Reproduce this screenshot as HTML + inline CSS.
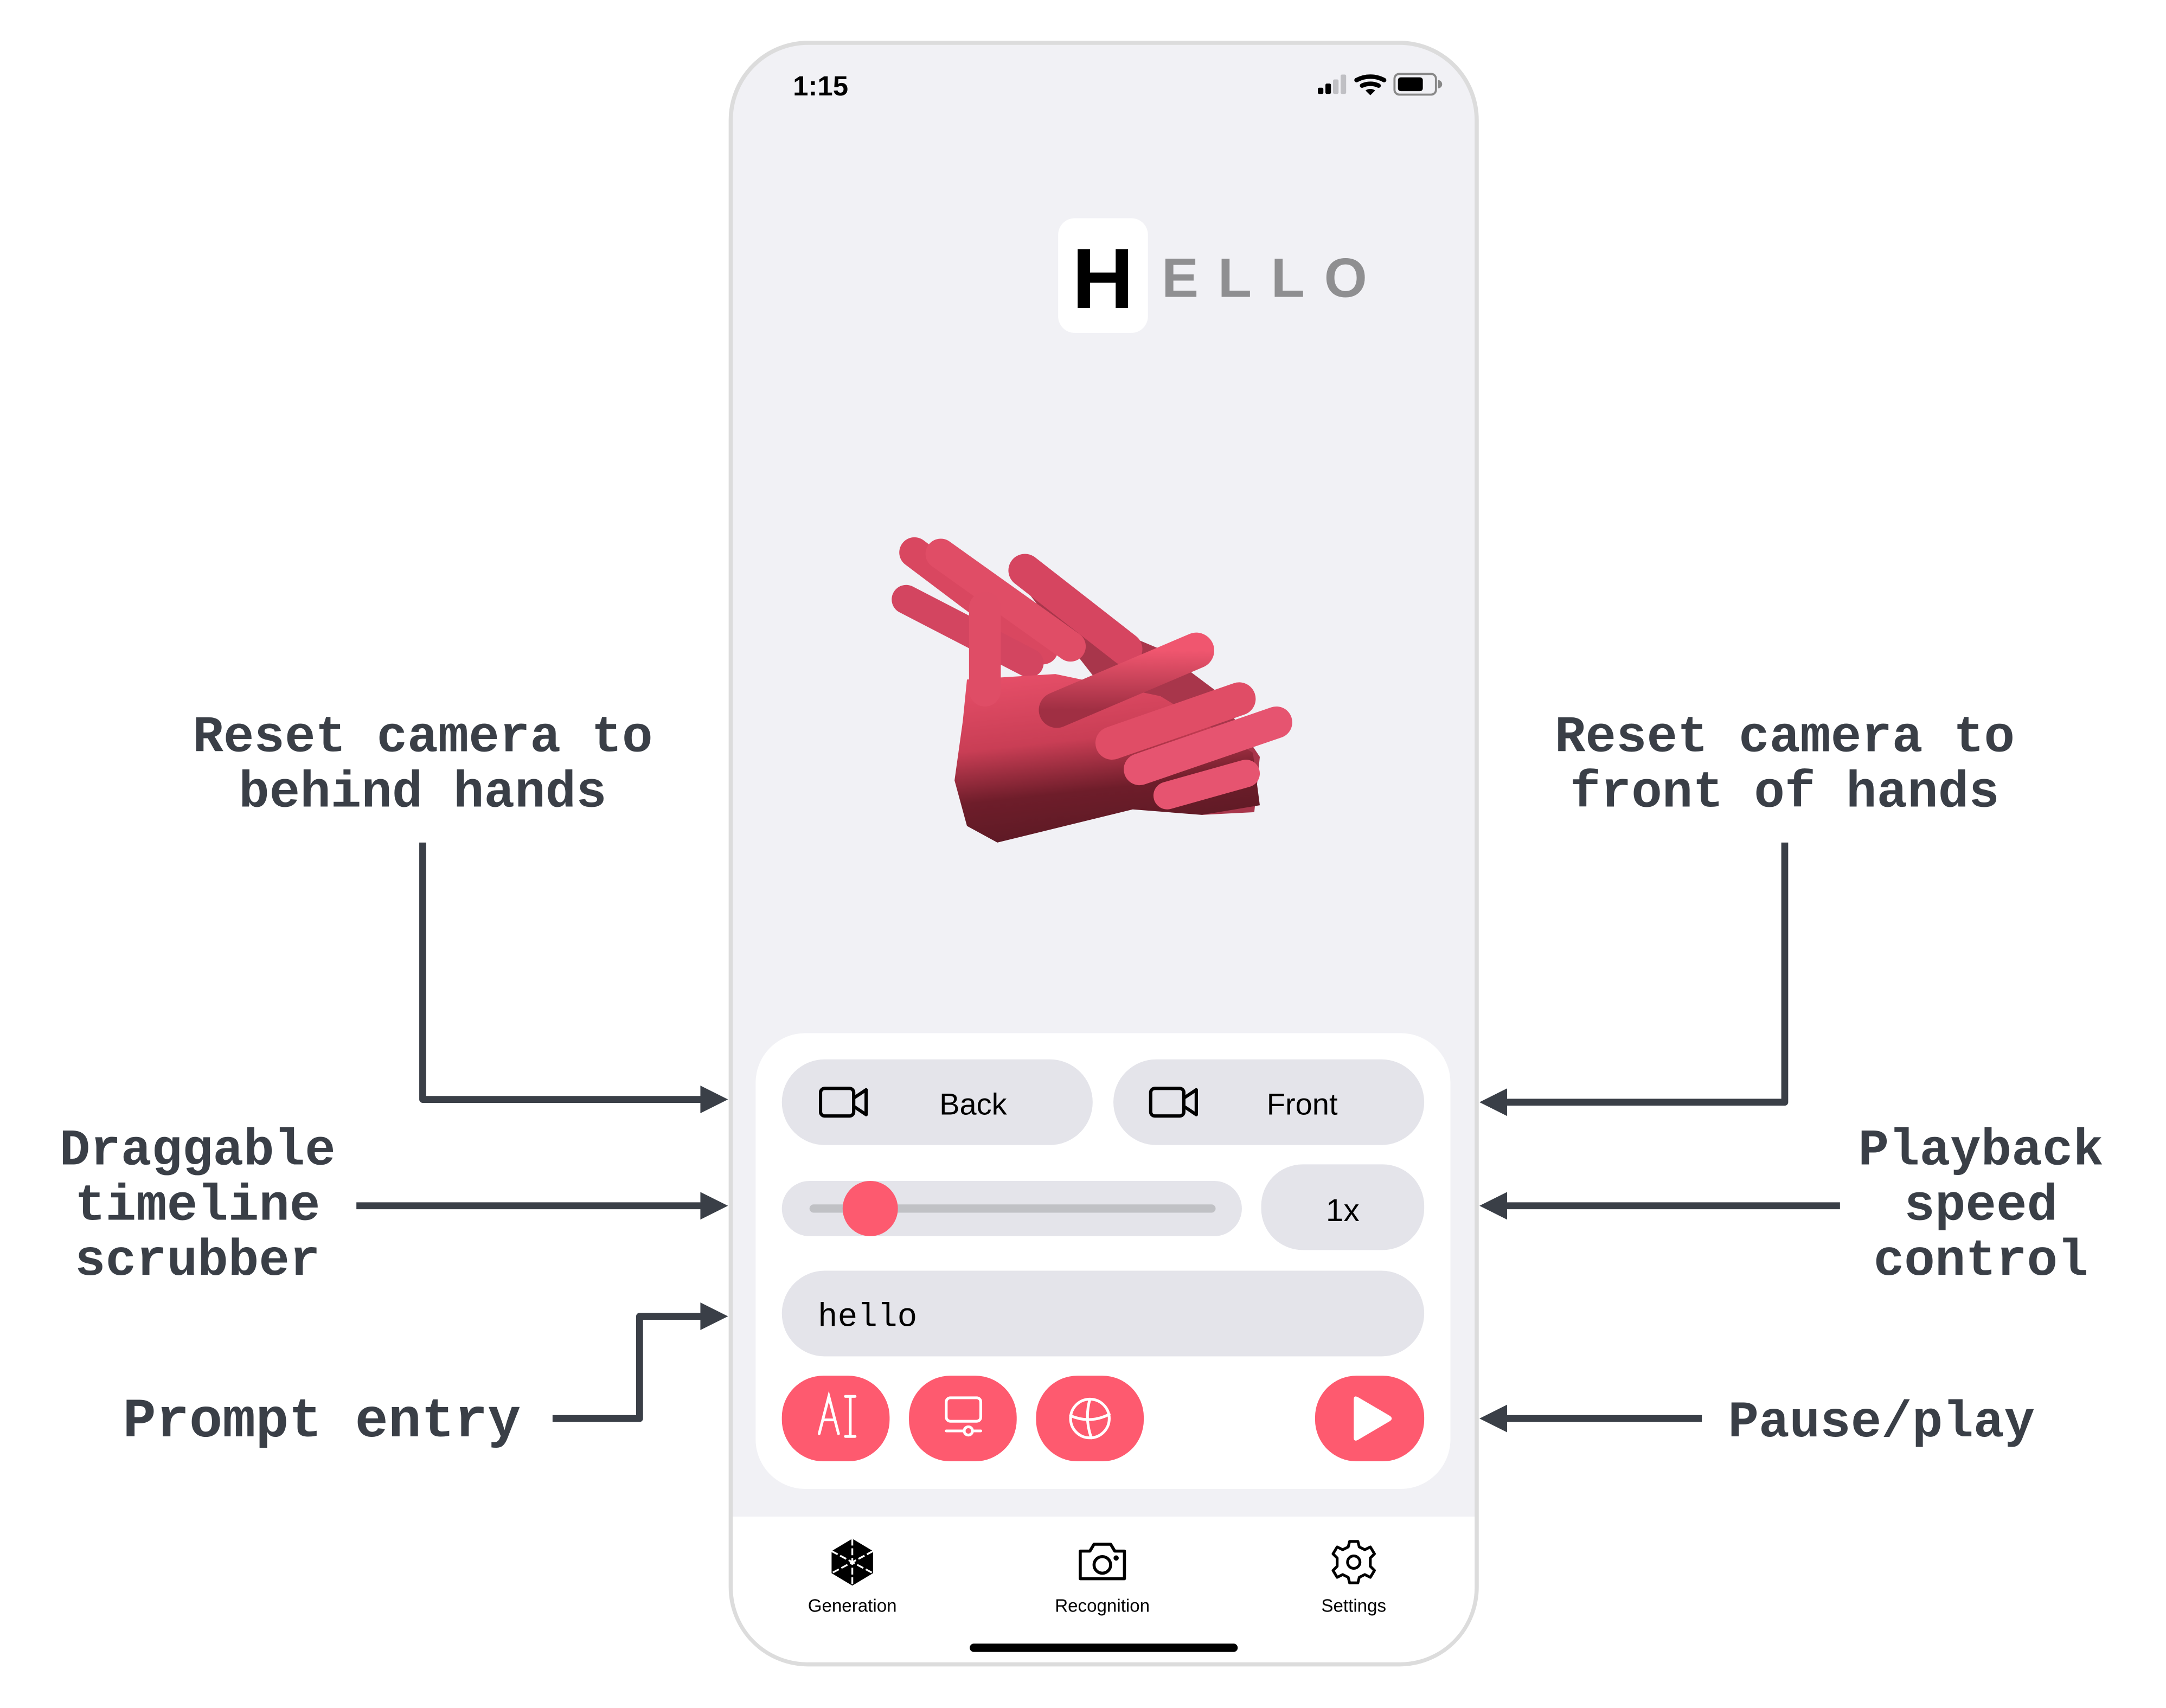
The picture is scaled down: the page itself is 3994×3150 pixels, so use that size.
<!DOCTYPE html>
<html><head><meta charset="utf-8"><style>html,body{margin:0;padding:0;background:#fff;}svg{display:block}</style></head>
<body>
<svg width="3994" height="3150" viewBox="0 0 1568 1236.6" preserveAspectRatio="none" xmlns="http://www.w3.org/2000/svg">
<defs>
<linearGradient id="pg" x1="0" y1="0" x2="0.2" y2="1"><stop offset="0" stop-color="#e9506a"/><stop offset="0.45" stop-color="#c93e55"/><stop offset="0.75" stop-color="#6e1d2a"/><stop offset="1" stop-color="#5e1a25"/></linearGradient>
<linearGradient id="fg" x1="0" y1="0" x2="0" y2="1"><stop offset="0" stop-color="#f0566f"/><stop offset="1" stop-color="#a02f43"/></linearGradient>
</defs>
<rect width="1568" height="1237" fill="#fff"/>
<rect x="529" y="31" width="540" height="1174" rx="56" fill="#f1f1f5" stroke="#dcdcdc" stroke-width="3"/>
<path d="M530.5 1098 H1067.5 V1150 A54 54 0 0 1 1013 1203.5 H585 A54 54 0 0 1 530.5 1150 Z" fill="#fff"/>
<text x="574" y="69" font-family="Liberation Sans, sans-serif" font-size="20" font-weight="bold" fill="#000">1:15</text>
<rect x="954" y="63.5" width="4" height="4.5" rx="1" fill="#000"/>
<rect x="959.5" y="60.5" width="4" height="7.5" rx="1" fill="#000"/>
<rect x="965" y="57.5" width="4" height="10.5" rx="1" fill="#c0c0c4"/>
<rect x="970.5" y="54" width="4" height="14" rx="1" fill="#c0c0c4"/>
<path d="M982 58 A21 21 0 0 1 1002 58" stroke="#000" stroke-width="3.2" fill="none" stroke-linecap="round"/>
<path d="M986 62 A14 14 0 0 1 998 62" stroke="#000" stroke-width="3.2" fill="none" stroke-linecap="round"/>
<path d="M988.5 65.5 L992 69 L995.5 65.5 A6 6 0 0 0 988.5 65.5Z" fill="#000"/>
<rect x="1009.5" y="53.5" width="30" height="15" rx="3.5" fill="none" stroke="#888" stroke-width="1.5"/>
<rect x="1012" y="56" width="18" height="10" rx="2" fill="#000"/>
<path d="M1041 58 A3 3 0 0 1 1041 64Z" fill="#888"/>
<rect x="766" y="158" width="65" height="83" rx="12" fill="#fff"/>
<text x="776" y="223" font-family="Liberation Sans, sans-serif" font-size="62" font-weight="bold" fill="#000">H</text>
<text x="841" y="215" font-family="Liberation Sans, sans-serif" font-size="40" font-weight="bold" fill="#8f8f91" letter-spacing="14">ELLO</text>
<!-- hands -->
<path d="M745 430 L840 470 L880 500 L912 548 L908 588 L870 590 Z" fill="#a8364b"/>
<g stroke-linecap="round" fill="none">
<line x1="662" y1="400" x2="755" y2="470" stroke="#d94760" stroke-width="22"/>
<line x1="681" y1="401" x2="775" y2="468" stroke="#e04d66" stroke-width="22"/>
<line x1="742" y1="413" x2="815" y2="470" stroke="#d64560" stroke-width="24"/>
<line x1="656" y1="434" x2="745" y2="480" stroke="#d34560" stroke-width="21"/>
</g>
<path d="M700 492 L764 488 L840 504 L907 545 L912 583 L870 590 L820 586 L722 610 L700 598 L691 565 L697 522 Z" fill="url(#pg)"/>
<line x1="713" y1="440" x2="713" y2="500" stroke="#df4d66" stroke-width="23" stroke-linecap="round"/>
<g stroke-linecap="round" fill="none">
<line x1="866" y1="471" x2="765" y2="514" stroke="url(#fg)" stroke-width="26"/>
<line x1="897" y1="506" x2="805" y2="538" stroke="#e04d66" stroke-width="24"/>
<line x1="924" y1="523" x2="825" y2="557" stroke="#e65470" stroke-width="23"/>
<line x1="902" y1="560" x2="845" y2="576" stroke="#e65470" stroke-width="20"/>
</g>
<rect x="547" y="748" width="503" height="330" rx="36" fill="#fff"/>
<rect x="566" y="767" width="225" height="62" rx="31" fill="#e4e4ea"/>
<rect x="806" y="767" width="225" height="62" rx="31" fill="#e4e4ea"/>
<g stroke="#000" stroke-width="2.4" fill="none" stroke-linejoin="round">
<rect x="594" y="788" width="24" height="20" rx="3"/><path d="M618 795 L627 789 V807 L618 801"/>
<rect x="833" y="788" width="24" height="20" rx="3"/><path d="M857 795 L866 789 V807 L857 801"/>
</g>
<text x="680" y="807" font-family="Liberation Sans, sans-serif" font-size="22" fill="#000">Back</text>
<text x="917" y="807" font-family="Liberation Sans, sans-serif" font-size="22" fill="#000">Front</text>
<rect x="566" y="855" width="333" height="40" rx="20" fill="#e4e4ea"/>
<rect x="586" y="872" width="294" height="6" rx="3" fill="#c0c1c5"/>
<circle cx="630" cy="875" r="20" fill="#fd5a6f"/>
<rect x="913" y="843" width="118" height="62" rx="30" fill="#e4e4ea"/>
<text x="972" y="884" text-anchor="middle" font-family="Liberation Sans, sans-serif" font-size="23" fill="#000">1x</text>
<rect x="566" y="920" width="465" height="62" rx="31" fill="#e4e4ea"/>
<text x="592" y="960" font-family="Liberation Mono, monospace" font-size="24" fill="#000">hello</text>
<g fill="#fe5a6f">
<rect x="566" y="996" width="78" height="62" rx="30"/>
<rect x="658" y="996" width="78" height="62" rx="30"/>
<rect x="750" y="996" width="78" height="62" rx="30"/>
<rect x="952" y="996" width="79" height="62" rx="30"/>
</g>
<g stroke="#fff" stroke-width="2" fill="none" stroke-linecap="round">
<path d="M593 1038 L600 1011 L607 1038 M596 1028 H604"/>
<path d="M612 1011 H619 M615.5 1011 V1040 M612 1040 H619"/>
<rect x="685" y="1012" width="25" height="17" rx="3"/>
<path d="M685 1036 H698 M704 1036 H710"/><circle cx="701" cy="1036" r="3"/>
<ellipse cx="789" cy="1027" rx="14" ry="14"/>
<path d="M789 1013 Q785 1027 790 1041 M775 1025 Q789 1031 803 1024"/>
</g>
<path d="M980 1013 Q980 1010 983 1011.5 L1006 1025 Q1009 1027 1006 1029 L983 1042.5 Q980 1044 980 1041 Z" fill="#fff"/>
<g transform="translate(617,1131)">
<path d="M0 -17 L15 -8 V8 L0 17 L-15 8 V-8 Z" fill="#000"/>
<path d="M0 -17 V17 M-15 -8 L15 8 M15 -8 L-15 8" stroke="#fff" stroke-width="1.3" stroke-dasharray="5 2"/>
</g>
<g transform="translate(798,1131)" fill="none" stroke="#000" stroke-width="2.2" stroke-linejoin="round">
<path d="M-16 -8 H-9 L-6 -13 H6 L9 -8 H16 V12 H-16 Z"/><circle cx="0" cy="2" r="6"/><circle cx="10" cy="-3" r="0.8" fill="#000"/>
</g>
<g transform="translate(980,1131)" fill="none" stroke="#000" stroke-width="2">
<path d="M-3 -15 H3 L4 -11 L8 -9 L12 -11 L15 -6 L12 -3 V3 L15 6 L12 11 L8 9 L4 11 L3 15 H-3 L-4 11 L-8 9 L-12 11 L-15 6 L-12 3 V-3 L-15 -6 L-12 -11 L-8 -9 L-4 -11 Z" stroke-linejoin="round"/>
<circle r="4.5"/>
</g>
<g font-family="Liberation Sans, sans-serif" font-size="13" fill="#000" text-anchor="middle">
<text x="617" y="1167">Generation</text><text x="798" y="1167">Recognition</text><text x="980" y="1167">Settings</text>
</g>
<rect x="702" y="1190" width="194" height="6" rx="3" fill="#000"/>
<g font-family="Liberation Mono, monospace" font-weight="bold" font-size="37" fill="#3a3f47" text-anchor="middle">
<text x="306" y="544">Reset camera to</text><text x="306" y="584">behind hands</text>
<text x="1292" y="544">Reset camera to</text><text x="1292" y="584">front of hands</text>
<text x="143" y="843">Draggable</text><text x="143" y="883">timeline</text><text x="143" y="923">scrubber</text>
<text x="1434" y="843">Playback</text><text x="1434" y="883">speed</text><text x="1434" y="923">control</text>
<text x="1362" y="1040">Pause/play</text>
<text x="233" y="1040" font-size="40">Prompt entry</text>
</g>
<g stroke="#3a3f47" stroke-width="5" fill="none" stroke-linejoin="round">
<path d="M306 610 V796 H510"/>
<path d="M258 873 H510"/>
<path d="M400 1027 H463 V953 H510"/>
<path d="M1292 610 V798 H1088"/>
<path d="M1332 873 H1088"/>
<path d="M1232 1027 H1088"/>
</g>
<g fill="#3a3f47">
<path d="M507 786 L527 796 L507 806Z"/>
<path d="M507 863 L527 873 L507 883Z"/>
<path d="M507 943 L527 953 L507 963Z"/>
<path d="M1091 788 L1071 798 L1091 808Z"/>
<path d="M1091 863 L1071 873 L1091 883Z"/>
<path d="M1091 1017 L1071 1027 L1091 1037Z"/>
</g>
</svg>
</body></html>
